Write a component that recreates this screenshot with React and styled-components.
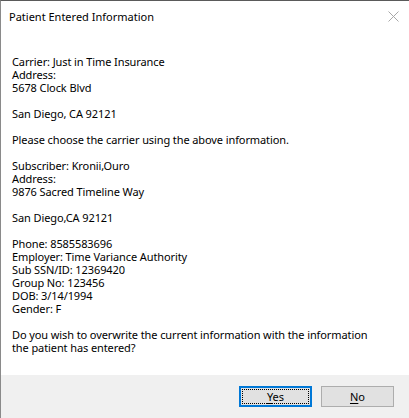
import styled, { createGlobalStyle } from "styled-components";

const GlobalStyle = createGlobalStyle`
  html, body {
    margin: 0;
    padding: 0;
    background: #ffffff;
  }
  body {
    font-family: "Noto Sans", "Open Sans", sans-serif;
    -webkit-font-smoothing: antialiased;
  }
`;

const Window = styled.div`
  width: 409px;
  height: 418px;
  box-sizing: border-box;
  display: flex;
  flex-direction: column;
  background: #ffffff;
  border-top: 1px solid #5a5a5a;
  border-left: 1px solid #8a8a8a;
  overflow: hidden;
`;

const TitleBar = styled.div`
  height: 31px;
  display: flex;
  align-items: center;
  justify-content: space-between;
  padding: 0 10px 0 8px;
  flex-shrink: 0;
`;

const Title = styled.span`
  font-size: 11px;
  color: #000000;
`;

const CloseButton = styled.span`
  display: flex;
  align-items: center;
  justify-content: center;
  width: 12px;
  height: 12px;
`;

const Body = styled.div`
  flex: 1;
  padding: 23px 12px 0 11px;
  display: flex;
  flex-direction: column;
  gap: 13px;
`;

const Paragraph = styled.p`
  margin: 0;
  font-size: 11px;
  line-height: 13px;
  letter-spacing: -0.1px;
  color: #000000;
  white-space: pre;
`;

const Footer = styled.div`
  height: 43px;
  flex-shrink: 0;
  background: #f0f0f0;
  display: flex;
  justify-content: flex-end;
  align-items: flex-start;
  gap: 9px;
  padding: 11px 15px 0 0;
  box-sizing: border-box;
`;

const Button = styled.button`
  width: 73px;
  height: 21px;
  box-sizing: border-box;
  padding: 0;
  margin: 0;
  font-family: inherit;
  font-size: 11px;
  color: #000000;
  background: #e1e1e1;
  border: ${(p) => (p.$focused ? "2px solid #0078d7" : "1px solid #adadad")};
  position: relative;
  display: flex;
  align-items: center;
  justify-content: center;

  &::after {
    content: "";
    display: ${(p) => (p.$focused ? "block" : "none")};
    position: absolute;
    inset: 1px;
    border: 1px dotted #000000;
  }

  u {
    text-decoration-thickness: 1px;
    text-underline-offset: 2px;
  }
`;

const blocks = [
  "Carrier: Just in Time Insurance\nAddress:\n5678 Clock Blvd",
  "San Diego, CA 92121",
  "Please choose the carrier using the above information.",
  "Subscriber: Kronii,Ouro\nAddress:\n9876 Sacred Timeline Way",
  "San Diego,CA 92121",
  "Phone: 8585583696\nEmployer: Time Variance Authority\nSub SSN/ID: 12369420\nGroup No: 123456\nDOB: 3/14/1994\nGender: F",
  "Do you wish to overwrite the current information with the information\nthe patient has entered?",
];

export default function App() {
  return (
    <>
      <GlobalStyle />
      <Window>
        <TitleBar>
          <Title>Patient Entered Information</Title>
          <CloseButton>
            <svg width="11" height="11" viewBox="0 0 11 11">
              <path d="M0.5 0.5 L10.5 10.5 M10.5 0.5 L0.5 10.5" stroke="#a8a8a8" strokeWidth="1" />
            </svg>
          </CloseButton>
        </TitleBar>
        <Body>
          {blocks.map((text, i) => (
            <Paragraph key={i}>{text}</Paragraph>
          ))}
        </Body>
        <Footer>
          <Button $focused>
            <span><u>Y</u>es</span>
          </Button>
          <Button>
            <span><u>N</u>o</span>
          </Button>
        </Footer>
      </Window>
    </>
  );
}
